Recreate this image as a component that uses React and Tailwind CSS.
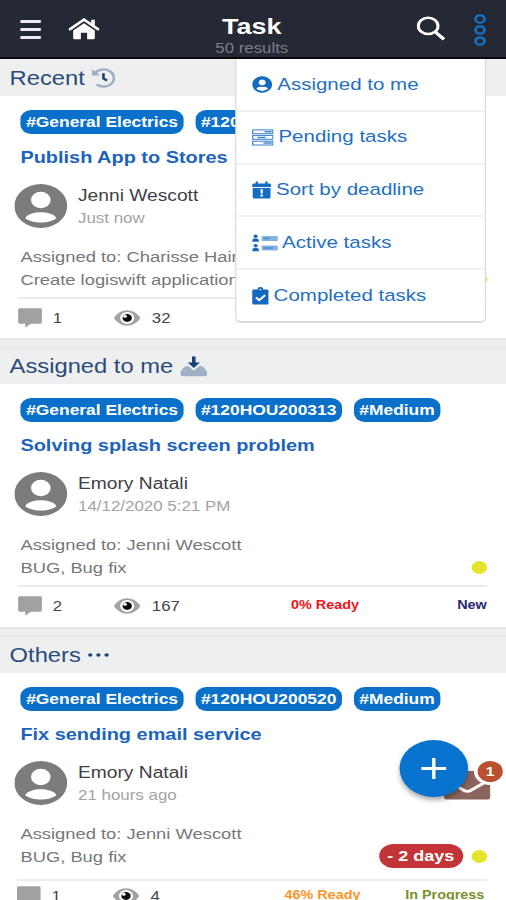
import React from 'react';
import { FaUserCircle } from 'react-icons/fa';

const HomeIcon = () => (
    <svg viewBox="0 0 26 22" className="w-[26px] h-[22px]" fill="white">
        <path d="M13 5.2 22 12.6V20.2a1 1 0 0 1-1 1h-5.4v-6.4h-5.2v6.4H5a1 1 0 0 1-1-1V12.6Z" />
        <path d="M1.3 11.2 13 1.6l11.7 9.6" fill="none" stroke="white" strokeWidth="2.4" strokeLinecap="round" />
        <path d="M19 1.8h3v6l-3-2.6Z" />
    </svg>
);

const SearchIcon = () => (
    <svg viewBox="0 0 24 25" className="w-6 h-[25px]" fill="none" stroke="white" strokeWidth="2.5">
        <circle cx="9.8" cy="9.9" r="8.2" />
        <path d="M15.6 15.8 23 23.4" strokeWidth="3" />
    </svg>
);

const MoreIcon = () => (
    <svg viewBox="0 0 10 32" className="w-[10px] h-8" fill="none" stroke="#1471c4" strokeWidth="2.2">
        <circle cx="5" cy="5" r="3.7" />
        <circle cx="5" cy="16" r="3.7" />
        <circle cx="5" cy="27" r="3.7" />
    </svg>
);

const HistoryIcon = () => (
    <svg viewBox="0 0 20 20" className="w-5 h-5 -ml-px">
        <path d="M3 5.6A8.6 8.6 0 1 1 4.6 16.4" fill="none" stroke="#9db0c6" strokeWidth="2.3" />
        <path d="M.6 1v6.6h6.8Z" fill="#9db0c6" />
        <path d="M10.2 5.2v5.2l3 2.3" fill="none" stroke="#1d4079" strokeWidth="2.2" />
    </svg>
);

const InboxIcon = () => (
    <svg viewBox="0 0 23 21" className="w-[23px] h-[21px]">
        <path
            d="M4.6 10.3h2.6l4.3 4.4 4.3-4.4h2.6a1 1 0 0 1 .8.5l3.3 4.6v3.2a1.6 1.6 0 0 1-1.6 1.6H2.1A1.6 1.6 0 0 1 .5 18.6v-3.2l3.3-4.6a1 1 0 0 1 .8-.5Z"
            fill="#9eafc6"
        />
        <path d="M10 .5h3v6h3.6L11.5 12 6.4 6.5H10Z" fill="#1a427e" />
    </svg>
);

const DotsIcon = () => (
    <svg viewBox="0 0 18 6" className="w-[18px] h-[6px]" fill="#1d3f78">
        <circle cx="2.2" cy="3" r="1.8" />
        <circle cx="9" cy="3" r="1.8" />
        <circle cx="15.8" cy="3" r="1.8" />
    </svg>
);

const PendingIcon = () => (
    <svg viewBox="0 0 18 17" className="w-[18px] h-[17px]" fill="none" stroke="#4a8bd0" strokeWidth="1.1">
        <rect x=".6" y=".9" width="16.8" height="3.8" />
        <rect x=".6" y="6.5" width="16.8" height="3.8" />
        <rect x=".6" y="12.2" width="16.8" height="3.8" />
        <path d="M10.5 2.8h6M4.5 8.4h7M9.5 14.1h7" strokeWidth="1.5" />
    </svg>
);

const CalendarIcon = () => (
    <svg viewBox="0 0 16 18" className="w-4 h-[18px]" fill="#146dc4">
        <path d="M3 .5h2v2h6v-2h2v2h1.6A1.2 1.2 0 0 1 15.8 3.7V6H.2V3.7A1.2 1.2 0 0 1 1.4 2.5H3Z" />
        <path d="M.6 7h14.8v9.3a1.2 1.2 0 0 1-1.2 1.2H1.8A1.2 1.2 0 0 1 .6 16.3Z" />
        <path d="M7 8.3h2.2l-.3 4.2H7.3ZM7.1 13.5h2v2h-2Z" fill="white" />
    </svg>
);

const ActiveIcon = () => (
    <svg viewBox="0 0 22 18" className="w-[22px] h-[18px]" fill="#1469bd">
        <circle cx="3" cy="2.3" r="1.7" />
        <path d="M.3 7.8V6.3A1.7 1.7 0 0 1 2 4.6h2a1.7 1.7 0 0 1 1.7 1.7v1.5Z" />
        <circle cx="3" cy="11.8" r="1.7" />
        <path d="M.3 17.3v-1.5A1.7 1.7 0 0 1 2 14.1h2a1.7 1.7 0 0 1 1.7 1.7v1.5Z" />
        <rect x="8" y="2" width="13.5" height="5" rx="1" fill="#86b3df" />
        <rect x="8" y="11.5" width="13.5" height="5" rx="1" fill="#86b3df" />
        <path d="M9.5 4.5h5M9.5 14h8" stroke="#4a8bcd" strokeWidth="1.6" />
    </svg>
);

const ClipboardIcon = () => (
    <svg viewBox="0 0 14 18" className="w-[14px] h-[18px]" fill="#1168c0">
        <path d="M1.4 2.4h3.3a2.3 2.3 0 0 1 4.6 0h3.3A1.2 1.2 0 0 1 13.8 3.6v12.7a1.2 1.2 0 0 1-1.2 1.2H1.4A1.2 1.2 0 0 1 .2 16.3V3.6A1.2 1.2 0 0 1 1.4 2.4Z" />
        <circle cx="7" cy="2.6" r=".8" fill="white" />
        <path d="M3.3 10.5 6 13.1l5-5" fill="none" stroke="white" strokeWidth="1.9" />
    </svg>
);

const Avatar = () => (
    <svg viewBox="0 0 44 44" className="w-11 h-11 shrink-0">
        <circle cx="22" cy="22" r="22" fill="#7c7c7c" />
        <circle cx="22" cy="16" r="8.2" fill="white" />
        <path d="M9 34.2C10.5 30 17 28.2 22 28.2s11.5 1.8 13 6C32 37 27 38.6 22 38.6S12 37 9 34.2Z" fill="white" />
    </svg>
);

const CommentIcon = () => (
    <svg viewBox="0 0 20 20" className="w-5 h-5" fill="#a0a1a2">
        <path d="M1.5.3h17A1.4 1.4 0 0 1 19.9 1.7v12.6a1.4 1.4 0 0 1-1.4 1.4H11l-5 3.9v-3.9H1.5A1.4 1.4 0 0 1 .1 14.3V1.7A1.4 1.4 0 0 1 1.5.3Z" />
    </svg>
);

const EyeIcon = () => (
    <svg viewBox="0 0 22 16" className="w-[22px] h-4">
        <path d="M0 8C2.5 3.3 6.5.3 11 .3S19.5 3.3 22 8c-2.5 4.7-6.5 7.7-11 7.7S2.5 12.7 0 8Z" fill="#a2a2a2" />
        <circle cx="11" cy="8" r="5.9" fill="white" />
        <circle cx="11" cy="8" r="3.9" fill="#0b0b0b" />
        <circle cx="9.2" cy="6.2" r="1.5" fill="white" />
    </svg>
);

const EnvelopeIcon = () => (
    <svg viewBox="0 0 39 30" className="w-[39px] h-[30px]">
        <rect x="0" y="1" width="38.5" height="28.5" rx="2" fill="#8a6560" />
        <path d="M0 9l16.8 11.5a5 5 0 0 0 5.4 0L36 11" fill="none" stroke="#fdf8f4" strokeWidth="2.8" />
    </svg>
);

const menuItems = [
    { label: 'Assigned to me', icon: <FaUserCircle className="w-[17px] h-[17px] text-[#1469c1]" />, gap: 'gap-1' },
    { label: 'Pending tasks', icon: <PendingIcon />, gap: 'gap-1' },
    { label: 'Sort by deadline', icon: <CalendarIcon />, gap: 'gap-1' },
    { label: 'Active tasks', icon: <ActiveIcon />, gap: 'gap-[3px]' },
    { label: 'Completed tasks', icon: <ClipboardIcon />, gap: 'gap-1' },
];

const sections = [
    {
        name: 'Recent',
        icon: <HistoryIcon />,
        tags: ['#General Electrics', '#120HOU200312'],
        title: 'Publish App to Stores',
        author: 'Jenni Wescott',
        time: 'Just now',
        assigned: 'Charisse Hair',
        text: 'Create logiswift application',
        comments: 1,
        views: 32,
    },
    {
        name: 'Assigned to me',
        icon: <InboxIcon />,
        tags: ['#General Electrics', '#120HOU200313', '#Medium'],
        title: 'Solving splash screen problem',
        author: 'Emory Natali',
        time: '14/12/2020 5:21 PM',
        assigned: 'Jenni Wescott',
        text: 'BUG, Bug fix',
        comments: 2,
        views: 167,
        ready: '0% Ready',
        readyClass: 'text-[#f01318]',
        status: 'New',
        statusClass: 'text-[#28286e]',
    },
    {
        name: 'Others',
        icon: <DotsIcon />,
        tags: ['#General Electrics', '#120HOU200520', '#Medium'],
        title: 'Fix sending email service',
        author: 'Emory Natali',
        time: '21 hours ago',
        assigned: 'Jenni Wescott',
        text: 'BUG, Bug fix',
        comments: 1,
        views: 4,
        overdue: '- 2 days',
        ready: '46% Ready',
        readyClass: 'text-[#fb9526]',
        status: 'In Progress',
        statusClass: 'text-[#78912c] pr-[2px]',
    },
];

const Header = () => (
    <header className="relative z-20 h-[59px] shrink-0 flex items-start bg-[#252935] border-b-2 border-[#08090c]">
        <div className="w-[110px] flex items-center pt-[18px] pl-[17px]">
            <div className="w-[17px] flex flex-col gap-[5px] mr-[23px]">
                <span className="h-[3px] bg-[#ececee]" />
                <span className="h-[3px] bg-[#ececee]" />
                <span className="h-[3px] bg-[#ececee]" />
            </div>
            <HomeIcon />
        </div>
        <div className="flex-1 flex flex-col items-center pt-[14px] pr-[2px]">
            <h1 className="text-[22.5px] leading-[25px] font-bold text-white">Task</h1>
            <p className="text-[14px] leading-[16px] mt-px text-[#7c7f87]">50 results</p>
        </div>
        <div className="w-[110px] flex justify-end items-start pr-[17px]">
            <div className="pt-4 mr-6"><SearchIcon /></div>
            <div className="pt-[14px]"><MoreIcon /></div>
        </div>
    </header>
);

const Menu = () => (
    <div className="absolute z-10 top-[58px] left-[196px] w-[209px] h-[265px] bg-white border border-[#d9dadc] border-b-2 rounded-b-[5px]">
        {menuItems.map((m, i) => (
            <div
                key={m.label}
                className={`h-[52.8px] pl-[13px] flex items-center text-[17.1px] text-[#2470c4] border-b-2 ${m.gap} ${i < 4 ? 'border-[#f1f1f2]' : 'border-transparent'}`}
            >
                {m.icon}
                <span className="whitespace-nowrap">{m.label}</span>
            </div>
        ))}
    </div>
);

const TaskSection = ({ s }) => (
    <section className="h-[288.3px] shrink-0 flex flex-col bg-white">
        <div className="h-9 shrink-0 flex items-center gap-[6px] pl-2 bg-[#eeefef]">
            <h2 className="text-[19.8px] leading-6 text-[#2b4a7c]">{s.name}</h2>
            {s.icon}
        </div>
        <div className="h-[242.3px] shrink-0 pt-[14px] px-[17px]">
            <div className="flex gap-[9.5px]">
                {s.tags.map((t) => (
                    <span key={t} className="h-6 px-[4.8px] rounded-[9px] bg-[#0b70ca] text-white text-[14.5px] leading-6 font-bold whitespace-nowrap">
                        {t}
                    </span>
                ))}
            </div>
            <h3 className="mt-[14px] text-[16.6px] leading-5 font-bold text-[#1b63bd]">{s.title}</h3>
            <div className="flex mt-4 -ml-[5px]">
                <Avatar />
                <div className="ml-[9px]">
                    <p className="text-[16px] leading-[23px] text-[#3f4145]">{s.author}</p>
                    <p className="text-[14.1px] leading-[23px] text-[#a3a3a5]">{s.time}</p>
                </div>
            </div>
            <div className="mt-[15px] text-[15.3px] leading-[23px] text-[#777779]">
                <p>Assigned to: {s.assigned}</p>
                <div className="flex items-center h-[23px]">
                    <p className="flex-1">{s.text}</p>
                    {s.overdue && (
                        <span className="h-6 px-[7px] mr-[7px] rounded-full bg-[#c23438] text-white text-[15px] leading-6 font-bold whitespace-nowrap">
                            {s.overdue}
                        </span>
                    )}
                    <span className="w-[13px] h-[13px] mr-[-1px] rounded-full bg-[#e2e52c]" />
                </div>
            </div>
            <div
                className={`-mr-[1px] border-t-2 border-[#ebebec] flex items-start text-[14px] leading-4 text-[#424345] ${s.overdue ? 'mt-[11px] pt-[5px] -ml-[3px]' : 'mt-[6px] pt-[9px] -ml-[2px]'}`}
            >
                <CommentIcon />
                <span className="w-[60px] pl-[9px] pt-[2px]">{s.comments}</span>
                <span className="pt-[2px]"><EyeIcon /></span>
                <span className={`pl-[9.5px] pt-[2px] ${s.overdue ? 'w-[121px]' : 'w-[125.5px]'}`}>{s.views}</span>
                <span className={`text-[12px] font-bold ${s.readyClass || ''} pt-px whitespace-nowrap`}>{s.ready}</span>
                <span className={`text-[12px] font-bold ${s.statusClass || ''} pt-px ml-auto whitespace-nowrap`}>{s.status}</span>
            </div>
        </div>
        <div className="h-[10px] shrink-0 bg-[#eeeeee] border-t-2 border-b border-t-[#e4e4e5] border-b-[#e4e4e5]" />
    </section>
);

// the add button sits on top of the inbox badge
const FloatingActions = () => (
    <div className="absolute z-10 left-[332px] top-[740px] w-[89px] h-[64px]">
        <div className="absolute left-[38px] top-[30px]">
            <EnvelopeIcon />
        </div>
        <div className="absolute left-[63px] top-[18px] w-[27px] h-[27px] rounded-full border-[3px] border-white bg-[#b9502f] text-white text-[13px] leading-[21px] font-bold text-center">
            1
        </div>
        <button
            type="button"
            className="absolute left-[0.5px] top-0 w-[57px] h-[57px] rounded-full bg-[#0873ce] flex items-center justify-center shadow-[0_3px_5px_rgba(0,0,0,0.35)]"
        >
            <svg viewBox="0 0 21 21" className="w-[21px] h-[21px]" stroke="white" strokeWidth="2.8">
                <path d="M10.5 0v21M0 10.5h21" />
            </svg>
        </button>
    </div>
);

export default function App() {
    return (
        <div className="w-[506px] h-[900px] overflow-hidden bg-white">
            {/* everything is drawn a bit wider than tall */}
            <div className="relative w-[421.67px] h-[900px] overflow-hidden origin-top-left scale-x-120 flex flex-col font-['Liberation_Sans',Arial,sans-serif]">
                <Header />
                <Menu />
                <main className="flex flex-col pt-px bg-[#eeefef]">
                    {sections.map((s) => (
                        <TaskSection key={s.name} s={s} />
                    ))}
                </main>
                <FloatingActions />
            </div>
        </div>
    );
}
